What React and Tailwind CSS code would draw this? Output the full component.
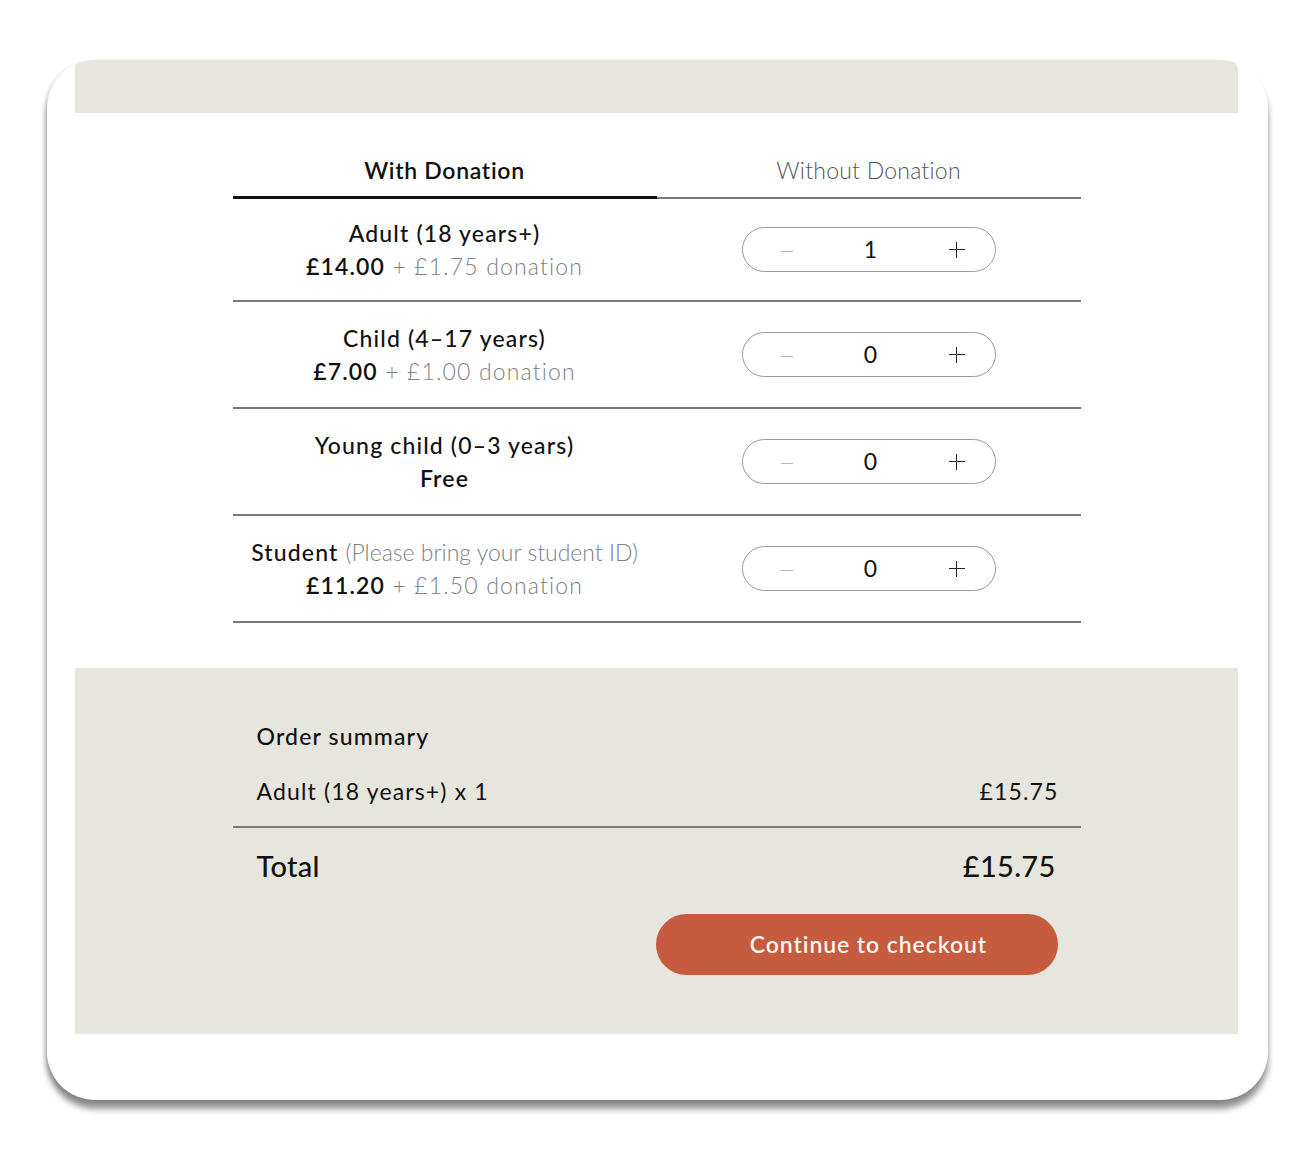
import React from "react";

const rows = [
  { title: <>Adult (18 years+)</>, price: "£14.00", donation: "+ £1.75 donation", qty: 1, h: "h-[103px]" },
  { title: <>Child (4–17 years)</>, price: "£7.00", donation: "+ £1.00 donation", qty: 0, h: "h-[107px]" },
  { title: <>Young child (0–3 years)</>, price: "Free", donation: null, qty: 0, h: "h-[107px]" },
  {
    title: (
      <>
        Student <span className="font-light tracking-normal text-[#808080]">(Please bring your student ID)</span>
      </>
    ),
    price: "£11.20",
    donation: "+ £1.50 donation",
    qty: 0,
    h: "h-[107px]",
  },
];

function Stepper({ qty }) {
  return (
    <div className="flex h-[45px] w-[254px] items-center justify-between rounded-full border border-[#9a9a9a] pl-[38px] pr-[30px]">
      <span className="mt-[4px] block h-[1px] w-[12px] bg-[#b5b5b5]" />
      <span className="text-[23px] font-normal leading-none text-[#111]">{qty}</span>
      <span className="relative block h-[16px] w-[16px]">
        <span className="absolute left-0 top-[7px] h-[1.5px] w-[16px] bg-[#222]" />
        <span className="absolute left-[7px] top-0 h-[16px] w-[1.5px] bg-[#222]" />
      </span>
    </div>
  );
}

export default function App() {
  return (
    <div
      className="min-h-[1160px] w-[1314px] bg-white pt-[60px]"
      style={{ fontFamily: "Lato, 'Noto Sans', sans-serif" }}
    >
      <div className="ml-[47px] h-[1040px] w-[1221px] overflow-hidden rounded-[48px] bg-white shadow-[0_9px_6px_rgba(0,0,0,0.42),-2px_2px_4px_rgba(0,0,0,0.15)]">
        <div className="ml-[28px] w-[1163px]">
          <div className="h-[53px] rounded-tr-[10px] rounded-tl-[6px] bg-[#e6e5de]" />

          {/* Tickets */}
          <div className="mx-auto h-[555px] w-[848px] text-[#111]">
            <div className="grid grid-cols-2 border-b-2 border-[#7a7a7a]">
              <div className="-mb-[2px] border-b-[3px] border-[#111] pb-[9px] pt-[41px] text-center text-[23px] font-semibold leading-[33px] tracking-[0.03em]">
                With Donation
              </div>
              <div className="pb-[10px] pt-[41px] text-center text-[23px] font-light leading-[33px] tracking-[0.01em] text-[#555]">
                Without Donation
              </div>
            </div>
            {rows.map((r, i) => (
              <div key={i} className={`grid grid-cols-2 items-center border-b-2 border-[#7a7a7a] ${r.h}`}>
                <div className="text-center text-[23px] leading-[33px] tracking-[0.05em]">
                  <div className="font-medium">{r.title}</div>
                  <div>
                    <span className="font-semibold">{r.price}</span>
                    {r.donation && (
                      <span className="font-light text-[#808080]"> {r.donation}</span>
                    )}
                  </div>
                </div>
                <div className="flex justify-center">
                  <Stepper qty={r.qty} />
                </div>
              </div>
            ))}
          </div>

          {/* Summary */}
          <div className="h-[366px] bg-[#e6e5de] pt-[52px]">
            <div className="mx-auto w-[848px] text-[#111]">
              <div className="px-[24px] text-[23px] font-medium leading-[33px] tracking-[0.05em]">Order summary</div>
              <div className="mt-[22px] flex justify-between pl-[24px] pr-[22px] text-[23px] leading-[33px] tracking-[0.05em]">
                <span>Adult (18 years+) x 1</span>
                <span>£15.75</span>
              </div>
              <div className="mt-[18px] border-t-2 border-[#7a7a7a]" />
              <div className="mt-[20px] flex justify-between pl-[24px] pr-[25px] text-[29px] font-medium leading-[36px] tracking-[0.01em]">
                <span>Total</span>
                <span>£15.75</span>
              </div>
              <div className="mt-[30px] flex justify-end pr-[23px]">
                <button className="h-[61px] w-[402px] rounded-full bg-[#c75b40] pl-[24px] text-[23px] font-semibold tracking-[0.04em] text-[#fbf4ef]">
                  Continue to checkout
                </button>
              </div>
            </div>
          </div>
        </div>
      </div>
    </div>
  );
}
